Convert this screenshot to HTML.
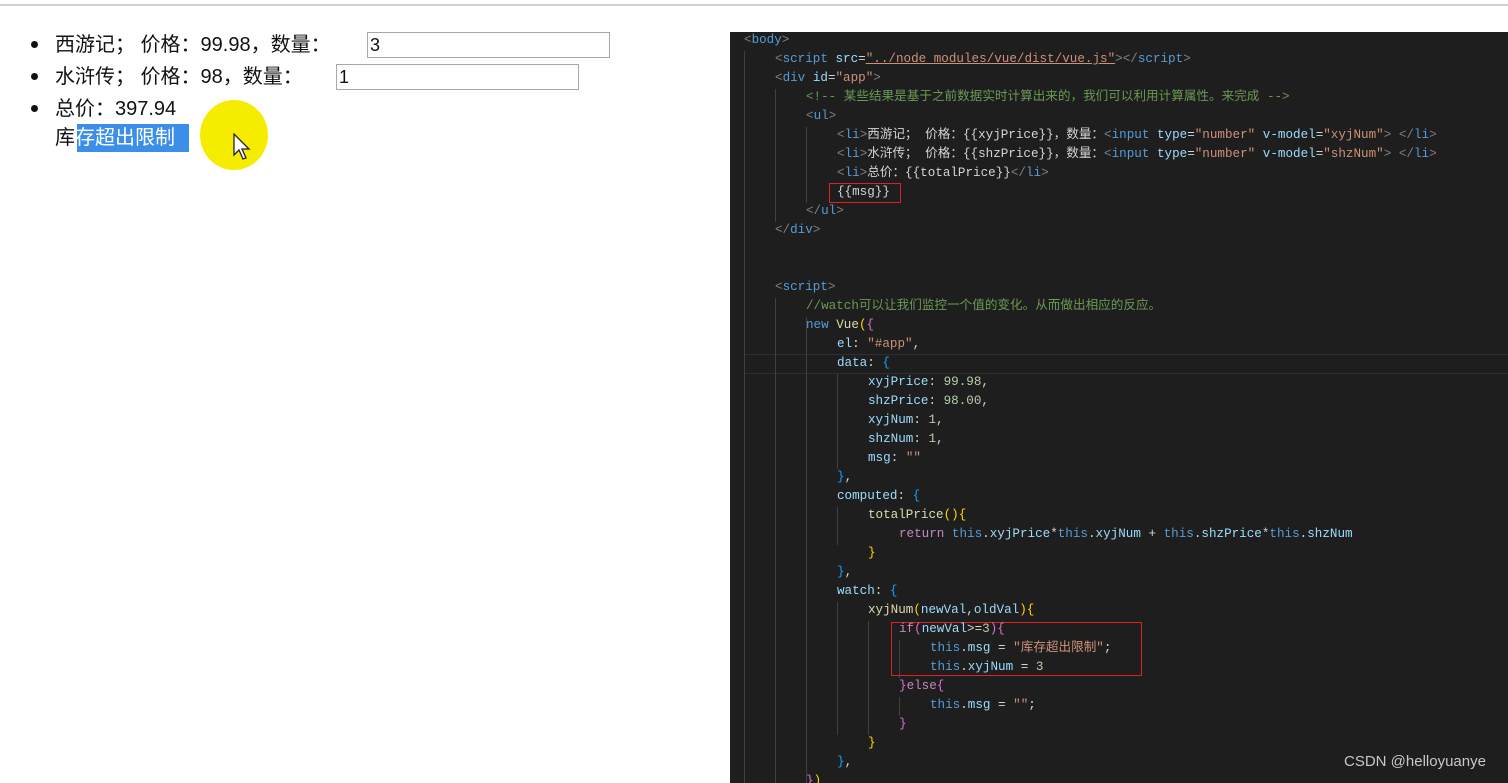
<!DOCTYPE html>
<html><head><meta charset="utf-8"><style>
body{margin:0;width:1508px;height:783px;overflow:hidden;background:#fff;position:relative;font-family:"Liberation Sans","Noto Sans CJK SC",sans-serif}
.topline{position:absolute;left:0;top:4px;width:1508px;height:2px;background:#d0d0d0}
.l{position:absolute;font-size:20px;color:#111;white-space:nowrap;line-height:28px}
.dot{position:absolute;width:7px;height:7px;border-radius:50%;background:#111}
.inp{position:absolute;border:1px solid #a8a8a8;height:26px;box-sizing:border-box;font-size:18px;line-height:24px;padding-left:2px;color:#111}
.code{position:absolute;left:730px;top:32px;width:778px;height:751px;background:#1e1e1e;overflow:hidden}
.ln{position:absolute;height:19px;line-height:19px;font-family:"Liberation Mono","Noto Sans CJK SC",monospace;font-size:12.6px;color:#d4d4d4;white-space:pre}
.g{color:#808080}.t{color:#569cd6}.a{color:#9cdcfe}.s{color:#ce9178}.c{color:#6a9955}.f{color:#dcdcaa}.n{color:#b5cea8}.k{color:#c586c0}.y{color:#ffd700}.p{color:#da70d6}.b{color:#179fff}
.guide{position:absolute;width:1px;background:#404040}
</style></head><body>
<div class="topline"></div>
<div class="dot" style="left:31px;top:41px"></div>
<div class="l" style="left:55px;top:31px">西游记； 价格：99.98，数量：</div>
<div class="inp" style="left:367px;top:32px;width:243px">3</div>
<div class="dot" style="left:31px;top:73px"></div>
<div class="l" style="left:55px;top:63px">水浒传； 价格：98，数量：</div>
<div class="inp" style="left:336px;top:64px;width:243px">1</div>
<div class="dot" style="left:31px;top:105px"></div>
<div class="l" style="left:55px;top:95px">总价：397.94</div>
<div style="position:absolute;left:77px;top:124px;width:112px;height:28px;background:#3b8fe8"></div>
<div class="l" style="left:55px;top:124px">库<span style="color:#fff">存超出限制</span></div>
<div style="position:absolute;left:200px;top:100px;width:68px;height:70px;border-radius:50%;background:#f5ec00"></div>
<svg style="position:absolute;left:233px;top:133px" width="20" height="30" viewBox="0 0 20 30"><path d="M1 1 L1 22 L6 17 L10 26 L13 25 L9 16 L16 16 Z" fill="#fff" stroke="#222" stroke-width="1.3"/></svg>

<div class="code">
<div style="position:absolute;left:14px;top:322px;width:764px;height:18px;border:1px solid #2f2f2f"></div>
<div class="guide" style="left:14px;top:19px;height:740px"></div>
<div class="guide" style="left:45px;top:57px;height:133px"></div>
<div class="guide" style="left:76px;top:95px;height:76px"></div>
<div class="guide" style="left:45px;top:266px;height:490px"></div>
<div class="guide" style="left:76px;top:285px;height:470px"></div>
<div class="guide" style="left:107px;top:342px;height:95px"></div>
<div class="guide" style="left:107px;top:475px;height:38px"></div>
<div class="guide" style="left:107px;top:570px;height:133px"></div>
<div class="guide" style="left:138px;top:589px;height:114px"></div>
<div class="guide" style="left:169px;top:608px;height:38px"></div>
<div class="guide" style="left:169px;top:665px;height:19px"></div>
<div style="position:absolute;left:99px;top:151px;width:72px;height:20px;border:1px solid #e02020;box-sizing:border-box"></div>
<div style="position:absolute;left:161px;top:590px;width:251px;height:54px;border:1px solid #e02020;box-sizing:border-box"></div>
</div>
<div class="code" style="background:none">
<div class="ln" style="left:14px;top:-1px"><span class="g">&lt;</span><span class="t">body</span><span class="g">&gt;</span></div>
<div class="ln" style="left:45px;top:18px"><span class="g">&lt;</span><span class="t">script</span> <span class="a">src</span>=<span class="s" style="text-decoration:underline">"../node_modules/vue/dist/vue.js"</span><span class="g">&gt;&lt;/</span><span class="t">script</span><span class="g">&gt;</span></div>
<div class="ln" style="left:45px;top:37px"><span class="g">&lt;</span><span class="t">div</span> <span class="a">id</span>=<span class="s">"app"</span><span class="g">&gt;</span></div>
<div class="ln c" style="left:76px;top:56px">&lt;!-- 某些结果是基于之前数据实时计算出来的，我们可以利用计算属性。来完成 --&gt;</div>
<div class="ln" style="left:76px;top:75px"><span class="g">&lt;</span><span class="t">ul</span><span class="g">&gt;</span></div>
<div class="ln" style="left:107px;top:94px"><span class="g">&lt;</span><span class="t">li</span><span class="g">&gt;</span>西游记； 价格：{{xyjPrice}}，数量：<span class="g">&lt;</span><span class="t">input</span> <span class="a">type</span>=<span class="s">"number"</span> <span class="a">v-model</span>=<span class="s">"xyjNum"</span><span class="g">&gt;</span> <span class="g">&lt;/</span><span class="t">li</span><span class="g">&gt;</span></div>
<div class="ln" style="left:107px;top:113px"><span class="g">&lt;</span><span class="t">li</span><span class="g">&gt;</span>水浒传； 价格：{{shzPrice}}，数量：<span class="g">&lt;</span><span class="t">input</span> <span class="a">type</span>=<span class="s">"number"</span> <span class="a">v-model</span>=<span class="s">"shzNum"</span><span class="g">&gt;</span> <span class="g">&lt;/</span><span class="t">li</span><span class="g">&gt;</span></div>
<div class="ln" style="left:107px;top:132px"><span class="g">&lt;</span><span class="t">li</span><span class="g">&gt;</span>总价：{{totalPrice}}<span class="g">&lt;/</span><span class="t">li</span><span class="g">&gt;</span></div>
<div class="ln" style="left:107px;top:151px">{{msg}}</div>
<div class="ln" style="left:76px;top:170px"><span class="g">&lt;/</span><span class="t">ul</span><span class="g">&gt;</span></div>
<div class="ln" style="left:45px;top:189px"><span class="g">&lt;/</span><span class="t">div</span><span class="g">&gt;</span></div>
<div class="ln" style="left:45px;top:246px"><span class="g">&lt;</span><span class="t">script</span><span class="g">&gt;</span></div>
<div class="ln c" style="left:76px;top:265px">//watch可以让我们监控一个值的变化。从而做出相应的反应。</div>
<div class="ln" style="left:76px;top:284px"><span class="t">new</span> <span class="f">Vue</span><span class="y">(</span><span class="p">{</span></div>
<div class="ln" style="left:107px;top:303px"><span class="a">el</span>: <span class="s">"#app"</span>,</div>
<div class="ln" style="left:107px;top:322px"><span class="a">data</span>: <span class="b">{</span></div>
<div class="ln" style="left:138px;top:341px"><span class="a">xyjPrice</span>: <span class="n">99.98</span>,</div>
<div class="ln" style="left:138px;top:360px"><span class="a">shzPrice</span>: <span class="n">98.00</span>,</div>
<div class="ln" style="left:138px;top:379px"><span class="a">xyjNum</span>: <span class="n">1</span>,</div>
<div class="ln" style="left:138px;top:398px"><span class="a">shzNum</span>: <span class="n">1</span>,</div>
<div class="ln" style="left:138px;top:417px"><span class="a">msg</span>: <span class="s">""</span></div>
<div class="ln" style="left:107px;top:436px"><span class="b">}</span>,</div>
<div class="ln" style="left:107px;top:455px"><span class="a">computed</span>: <span class="b">{</span></div>
<div class="ln" style="left:138px;top:474px"><span class="f">totalPrice</span><span class="y">(){</span></div>
<div class="ln" style="left:169px;top:493px"><span class="k">return</span> <span class="t">this</span>.<span class="a">xyjPrice</span>*<span class="t">this</span>.<span class="a">xyjNum</span> + <span class="t">this</span>.<span class="a">shzPrice</span>*<span class="t">this</span>.<span class="a">shzNum</span></div>
<div class="ln" style="left:138px;top:512px"><span class="y">}</span></div>
<div class="ln" style="left:107px;top:531px"><span class="b">}</span>,</div>
<div class="ln" style="left:107px;top:550px"><span class="a">watch</span>: <span class="b">{</span></div>
<div class="ln" style="left:138px;top:569px"><span class="f">xyjNum</span><span class="y">(</span><span class="a">newVal</span>,<span class="a">oldVal</span><span class="y">){</span></div>
<div class="ln" style="left:169px;top:588px"><span class="k">if</span><span class="p">(</span><span class="a">newVal</span>&gt;=<span class="n">3</span><span class="p">){</span></div>
<div class="ln" style="left:200px;top:607px"><span class="t">this</span>.<span class="a">msg</span> = <span class="s">"库存超出限制"</span>;</div>
<div class="ln" style="left:200px;top:626px"><span class="t">this</span>.<span class="a">xyjNum</span> = <span class="n">3</span></div>
<div class="ln" style="left:169px;top:645px"><span class="p">}</span><span class="k">else</span><span class="p">{</span></div>
<div class="ln" style="left:200px;top:664px"><span class="t">this</span>.<span class="a">msg</span> = <span class="s">""</span>;</div>
<div class="ln" style="left:169px;top:683px"><span class="p">}</span></div>
<div class="ln" style="left:138px;top:702px"><span class="y">}</span></div>
<div class="ln" style="left:107px;top:721px"><span class="b">}</span>,</div>
<div class="ln" style="left:76px;top:740px"><span class="p">}</span><span class="y">)</span></div>
</div>
<div style="position:absolute;left:1344px;top:753px;font-size:15px;color:#c8c8c8;font-family:'Liberation Sans',sans-serif">CSDN @helloyuanye</div>
</body></html>
